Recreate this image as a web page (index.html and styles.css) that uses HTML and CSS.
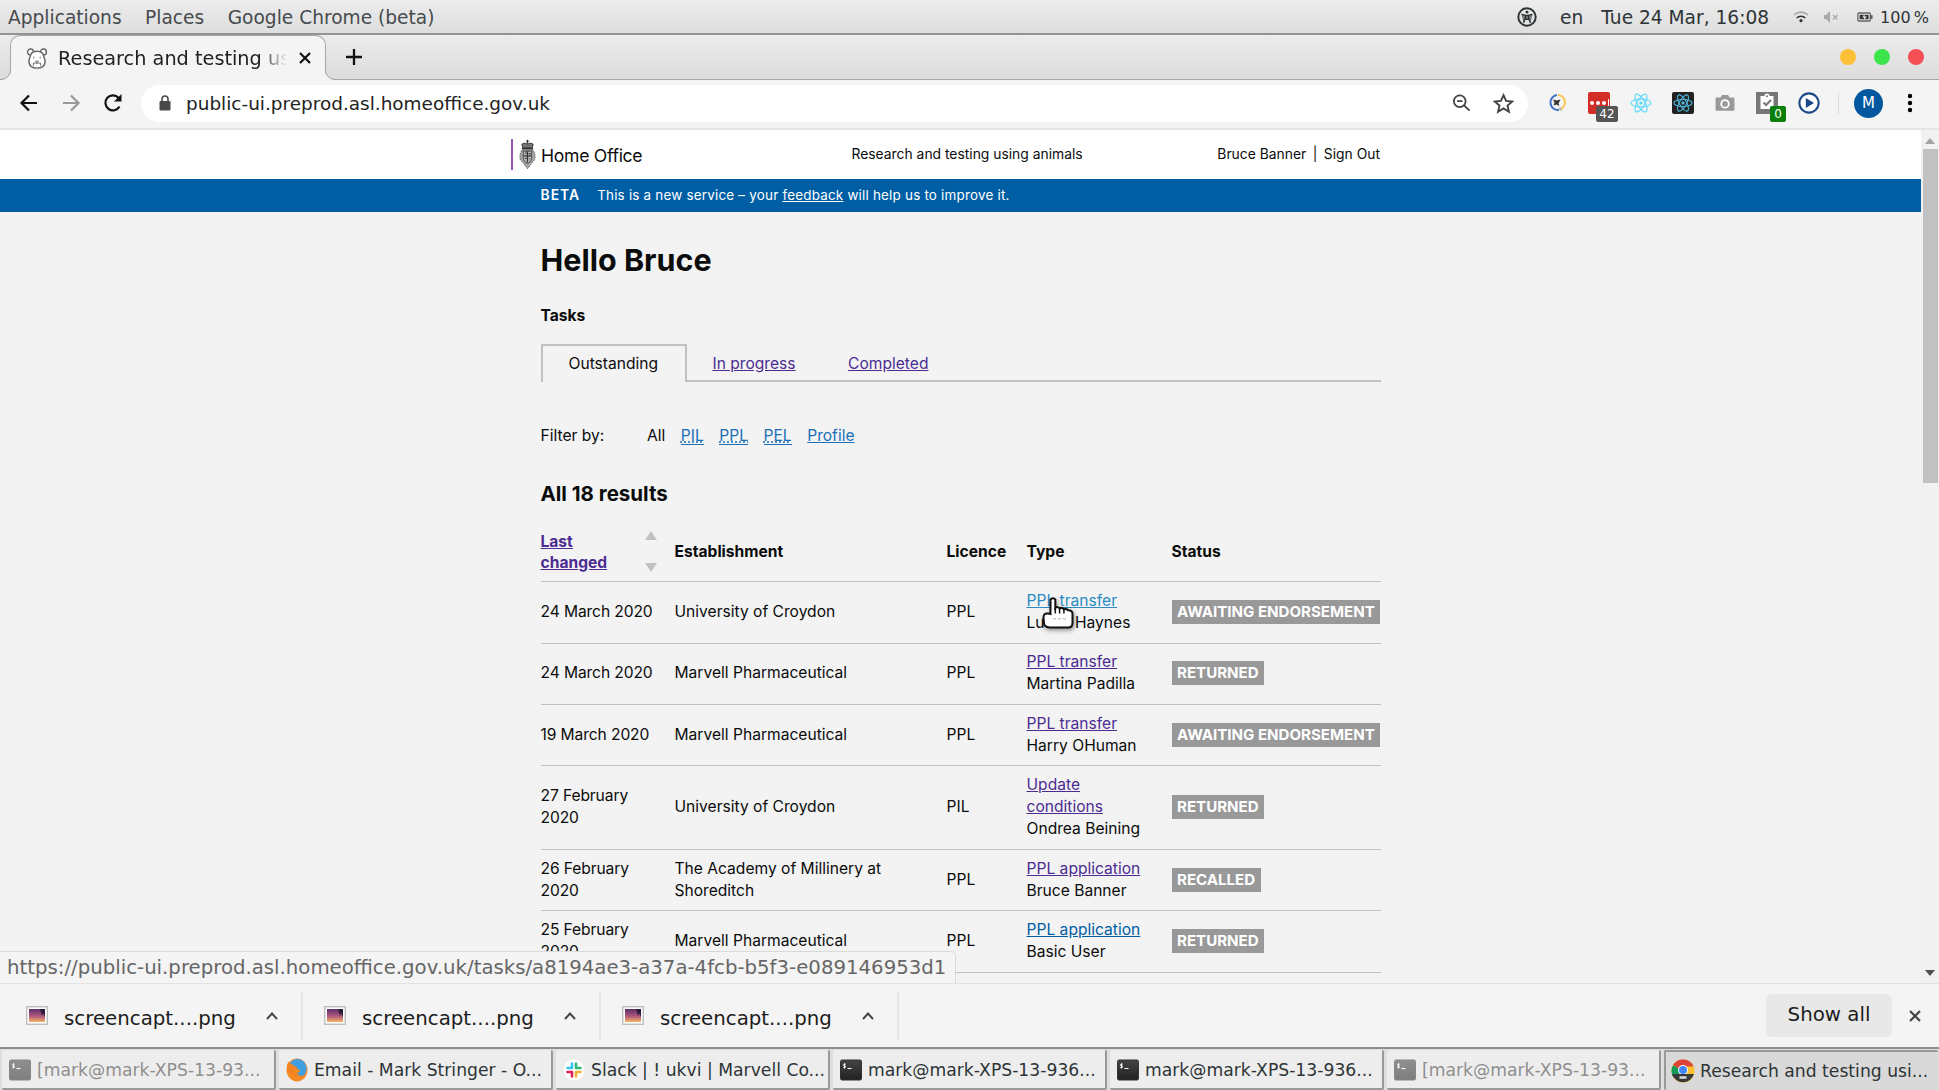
FILE: index.html
```html
<!DOCTYPE html>
<html lang="en">
<head>
<meta charset="utf-8">
<title>Research and testing using animals</title>
<link rel="stylesheet" href="styles.css">
</head>
<body>
<svg class="defs" width="0" height="0" aria-hidden="true">
  <defs>
    <linearGradient id="sunset" x1="0" y1="0" x2="0" y2="1"><stop offset="0" stop-color="#5b2f6b"/><stop offset=".55" stop-color="#b0577c"/><stop offset="1" stop-color="#f5b463"/></linearGradient>
    <linearGradient id="term" x1="0" y1="0" x2="0" y2="1"><stop offset="0" stop-color="#444"/><stop offset="1" stop-color="#222"/></linearGradient>
    <symbol id="i-picture" viewBox="0 0 22 20"><rect x=".75" y=".75" width="20.5" height="17.5" fill="#fff" stroke="#b9b9b9" stroke-width="1.3"/><rect x="3" y="3" width="16" height="13" fill="url(#sunset)"/><path d="M14 3h5v8l-2-4-1 3-1-4z" fill="#2c1a38"/></symbol>
    <symbol id="i-term" viewBox="0 0 22 22"><rect x=".5" y="1" width="21" height="20" rx="1.5" fill="url(#term)" stroke="#333"/><path d="M5.7 5.2H4.100a.9.9 0 0 0 0 1.700h.9a.9.9 0 0 1 0 1.700H3.300M4.500 4.300v5.200" stroke="#fff" fill="none"/><path d="M7.500 9.500h4" stroke="#fff" stroke-width="1.200"/></symbol>
    <symbol id="i-react" viewBox="0 0 24 24"><g fill="none" stroke="currentColor" stroke-width="1.300"><ellipse cx="12" cy="12" rx="11" ry="4.200"/><ellipse cx="12" cy="12" rx="11" ry="4.200" transform="rotate(60 12 12)"/><ellipse cx="12" cy="12" rx="11" ry="4.200" transform="rotate(120 12 12)"/></g><circle cx="12" cy="12" r="2" fill="currentColor"/></symbol>
    <symbol id="i-up" viewBox="0 0 14 10"><path d="M2 8l5-5.500L12 8" fill="none" stroke="#444" stroke-width="2"/></symbol>
    <symbol id="i-x" viewBox="0 0 14 14"><path d="M2 2l10 10M12 2L2 12" fill="none" stroke="currentColor" stroke-width="2.200"/></symbol>
  </defs>
</svg>

<header class="desktop-bar">
  <nav class="desktop-menu"><span>Applications</span><span>Places</span><span>Google Chrome (beta)</span></nav>
  <div class="desktop-status">
    <svg class="access" width="20" height="20" viewBox="0 0 20 20"><circle cx="10" cy="10" r="8.700" fill="none" stroke="#2e3436" stroke-width="2"/><circle cx="10" cy="5" r="1.500" fill="#2e3436"/><path d="M4.500 7.300l4 1v2.700l-2 5M15.500 7.300l-4 1v2.700l2 5M8.500 8.300h3v4h-3z" fill="#2e3436" stroke="#2e3436" stroke-width="1.300" fill-opacity=".6"/></svg>
    <span class="lang">en</span>
    <span class="clock">Tue 24 Mar, 16:08</span>
    <svg class="wifi" width="16" height="12" viewBox="0 0 16 12"><path d="M1 4a10 10 0 0 1 14 0" fill="none" stroke="#aaa" stroke-width="1.600"/><path d="M3.700 7a6 6 0 0 1 8.600 0" fill="none" stroke="#2e3436" stroke-width="1.600"/><circle cx="8" cy="9.700" r="1.600" fill="#2e3436"/></svg>
    <svg class="mute" width="16" height="12" viewBox="0 0 16 12"><path d="M1 4h2l4-4v12l-4-4H1z" fill="#aaa"/><path d="M10 4l4.500 4.500M14.500 4L10 8.500" stroke="#aaa" stroke-width="1.300"/></svg>
    <svg class="battery" width="16" height="10" viewBox="0 0 18 11"><rect x="1" y="1" width="14" height="9" rx="1" fill="none" stroke="#666" stroke-width="1.500"/><rect x="3" y="3" width="10" height="5" fill="#2e3436"/><path d="M8.500 2L6 6h2v3l3-4H8.500z" fill="#eee"/><rect x="15.500" y="3.500" width="2" height="4" fill="#555"/></svg>
    <span class="charge">100&#8201;%</span>
  </div>
</header>

<div class="tabstrip">
  <div class="browser-tab">
    <svg class="corner left" width="10" height="10" viewBox="0 0 10 10"><path d="M10 0v10H0A10 10 0 0 0 10 0z" fill="#f4f4f4"/><path d="M0 9.500A9.500 9.500 0 0 0 9.500 0" fill="none" stroke="#a6a6a6"/></svg>
    <svg class="bear" width="22" height="23" viewBox="0 0 24 24" fill="#fff" stroke="#666" stroke-width="1.600"><circle cx="5" cy="5" r="3.300"/><circle cx="19" cy="5" r="3.300"/><path d="M12 4.200c5 0 7 2 7.500 6 .4 1.500 1.500 3 1.300 5.500C20.500 20 17 22.500 12 22.500S3.500 20 3.200 15.700c-.2-2.500.9-4 1.300-5.500.5-4 2.500-6 7.500-6z"/><path d="M8.500 10v2M15.500 10v2M8 20v-3h8v3M10 15h4M12 15v3" fill="none" stroke-width="1"/></svg>
    <span class="tab-title">Research and testing us</span>
    <svg class="tab-close" width="14" height="14"><use href="#i-x"/></svg>
    <svg class="corner right" width="10" height="10" viewBox="0 0 10 10"><path d="M0 0v10h10A10 10 0 0 1 0 0z" fill="#f4f4f4"/><path d="M.5 0A9.500 9.500 0 0 0 10 9.500" fill="none" stroke="#a6a6a6"/></svg>
  </div>
  <svg class="new-tab" width="18" height="18" viewBox="0 0 18 18"><path d="M9 1v16M1 9h16" stroke="#111" stroke-width="2.300"/></svg>
  <div class="window-buttons"><i class="min"></i><i class="max"></i><i class="close"></i></div>
</div>

<div class="toolbar">
  <svg class="nav-icon" width="20" height="20" viewBox="0 0 20 20"><path d="M18 10H3M10 2.500L2.500 10l7.500 7.500" fill="none" stroke="#111" stroke-width="2.200"/></svg>
  <svg class="nav-icon" width="20" height="20" viewBox="0 0 20 20"><path d="M2 10h15M10 2.500l7.500 7.500-7.500 7.500" fill="none" stroke="#999" stroke-width="2.200"/></svg>
  <svg class="nav-icon reload" width="20" height="20" viewBox="0 0 20 20"><path d="M16.500 13.500A7.500 7.500 0 1 1 15.600 5" fill="none" stroke="#111" stroke-width="2.200"/><path d="M18.500 1v7.500H11z" fill="#111"/></svg>
  <div class="omnibox">
    <svg class="lock" width="12" height="16" viewBox="0 0 12 16"><rect x=".5" y="6" width="11" height="9.500" rx="1.200" fill="#4a4a4a"/><path d="M3 6V4a3 3 0 0 1 6 0v2" fill="none" stroke="#4a4a4a" stroke-width="1.600"/></svg>
    <span class="url">public-ui.preprod.asl.homeoffice.gov.uk</span>
    <svg class="zoom-out" width="20" height="18" viewBox="0 0 22 20"><circle cx="8.500" cy="8" r="6.500" fill="none" stroke="#444" stroke-width="2"/><path d="M13 12.500l6.500 6M5.500 8h6" stroke="#444" stroke-width="2"/></svg>
    <svg class="star" width="21" height="21" viewBox="0 0 24 24"><path d="M12 2.500l2.900 6.600 7.100.6-5.400 4.700 1.600 7L12 17.700l-6.200 3.700 1.600-7L2 9.700l7.100-.6z" fill="none" stroke="#444" stroke-width="2.200"/></svg>
  </div>
  <div class="extensions">
    <svg class="ext" width="22" height="22" viewBox="0 0 22 22"><path d="M11 3a7.500 7.500 0 1 0 2 15" fill="none" stroke="#3f6fc9" stroke-width="2"/><path d="M12 3a7.500 7.500 0 0 1 2 14.500" fill="none" stroke="#f7c548" stroke-width="2"/><path d="M7 7.500l3.500 1 4-1-2 4 1 2.500-3-1.500-3 1 1-2.800z" fill="#333"/><path d="M12 16l4 4-1-5z" fill="#bbb"/></svg>
    <span class="ext lastpass"><i></i><i></i><i></i><b></b><em class="count">42</em></span>
    <svg class="ext react" width="22" height="22"><use href="#i-react"/></svg>
    <span class="ext react-dark"><svg width="20" height="20"><use href="#i-react"/></svg></span>
    <svg class="ext" width="22" height="18" viewBox="0 0 22 20"><path d="M1.500 4H6l1.500-3h7L16 4h4.500q1 0 1 1v12.500q0 1-1 1h-19q-1 0-1-1V5q0-1 1-1z" fill="#999"/><circle cx="11" cy="11" r="4.200" fill="#999" stroke="#fff" stroke-width="2"/></svg>
    <span class="ext clipboard"><svg width="22" height="22" viewBox="1 0 22 22"><path d="M5.500 4h4a2.500 2.500 0 0 1 5 0h4v13h-13z" fill="#fff"/><circle cx="12" cy="4.300" r="1" fill="#777"/><path d="M8.500 10.500l2.500 2.500 5-5" fill="none" stroke="#777" stroke-width="2"/></svg><em class="count zero">0</em></span>
    <svg class="ext" width="22" height="22" viewBox="0 0 24 24"><circle cx="12" cy="12" r="10.500" fill="#fff" stroke="#1b4a86" stroke-width="2.200"/><path d="M8.500 6.500l9 5.500-9 5.500z" fill="#1b4a86"/></svg>
  </div>
  <span class="toolbar-divider"></span>
  <span class="avatar">M</span>
  <svg class="kebab" width="6" height="20" viewBox="0 0 6 20"><circle cx="3" cy="3" r="2.200"/><circle cx="3" cy="10" r="2.200"/><circle cx="3" cy="17" r="2.200"/></svg>
</div>

<div class="viewport">
  <div class="page">
    <div class="header-bar">
      <div class="site-header">
        <div class="brand">
          <svg class="crest" width="17" height="31" viewBox="0 0 18 31"><path d="M9 0v4M7.500 1.500h3" stroke="#333" stroke-width="1.200"/><path d="M3 4.500q3-2 6 0 3-2 6 0l-1 4H4z" fill="#777" stroke="#333"/><path d="M3 9.500h12" stroke="#222" stroke-width="1.500"/><path d="M3 11q-3 5-1.500 10L5 25l4 5.500 4-5.500 3.500-4Q18 16 15 11z" fill="#aaa" stroke="#555" stroke-dasharray="2 1"/><path d="M4.500 12h9v8q-1 4-4.500 5-3.500-1-4.500-5z" fill="#bbb" stroke="#444"/><path d="M9 12v12M5 17h8M6.500 14h1.500M10.500 14.500h2M6.500 19.500h1.500M11 20h1" stroke="#333" stroke-width="1.300"/></svg>
          <span>Home Office</span>
        </div>
        <span class="service">Research and testing using animals</span>
        <span class="user"><span>Bruce Banner</span><span>|</span><span>Sign Out</span></span>
      </div>
    </div>
    <div class="phase">
      <div class="phase-inner"><strong>BETA</strong><span>This is a new service – your <a>feedback</a> will help us to improve it.</span></div>
    </div>
    <main class="content">
      <h1>Hello Bruce</h1>
      <h2>Tasks</h2>
      <nav class="tabs"><span class="tab active">Outstanding</span><a class="tab visited">In progress</a><a class="tab visited">Completed</a><span class="tabs-rest"></span></nav>
      <div class="filters"><span class="filter-label">Filter by:</span><span>All</span><a class="abbr">PIL</a><a class="abbr">PPL</a><a class="abbr">PEL</a><a>Profile</a></div>
      <h3>All 18 results</h3>
      <table class="tasks">
        <colgroup><col class="c-date"><col class="c-est"><col class="c-lic"><col class="c-type"><col></colgroup>
        <thead><tr>
          <th><div class="sort"><a class="visited">Last changed</a><span class="arrows"><i class="up"></i><i class="down"></i></span></div></th>
          <th>Establishment</th><th>Licence</th><th>Type</th><th>Status</th>
        </tr></thead>
        <tbody>
          <tr><td>24 March 2020</td><td>University of Croydon</td><td>PPL</td><td><a class="hover">PPL transfer</a><br>Lucas Haynes</td><td><span class="badge">Awaiting endorsement</span></td></tr>
          <tr><td>24 March 2020</td><td>Marvell Pharmaceutical</td><td>PPL</td><td><a class="visited">PPL transfer</a><br>Martina Padilla</td><td><span class="badge">Returned</span></td></tr>
          <tr><td>19 March 2020</td><td>Marvell Pharmaceutical</td><td>PPL</td><td><a class="visited">PPL transfer</a><br>Harry OHuman</td><td><span class="badge">Awaiting endorsement</span></td></tr>
          <tr><td>27 February 2020</td><td>University of Croydon</td><td>PIL</td><td><a class="visited">Update conditions</a><br>Ondrea Beining</td><td><span class="badge">Returned</span></td></tr>
          <tr><td>26 February 2020</td><td>The Academy of Millinery at Shoreditch</td><td>PPL</td><td><a class="visited">PPL application</a><br>Bruce Banner</td><td><span class="badge">Recalled</span></td></tr>
          <tr><td>25 February 2020</td><td>Marvell Pharmaceutical</td><td>PPL</td><td><a>PPL application</a><br>Basic User</td><td><span class="badge">Returned</span></td></tr>
        </tbody>
      </table>
    </main>
  </div>
  <div class="scrollbar"><i class="sb-up"></i><i class="sb-thumb"></i><i class="sb-down"></i></div>
  <div class="status-bubble">https://public-ui.preprod.asl.homeoffice.gov.uk/tasks/a8194ae3-a37a-4fcb-b5f3-e089146953d1</div>
  <svg class="cursor" width="36" height="36" viewBox="0 0 36 36"><path d="M10.500 3.500q2.500-2.500 4.800 0V12q2-2 4.300.5 2.500-1.500 4.200.8 2.600-1.200 4.200.9 4-.2 4.500 3V27q0 4.500-4.500 4.500H9.500Q4.500 31 4 27.500l-.5-6Q3.500 17 8 17.500l2.500.5z" fill="#fff" stroke="#111" stroke-width="2"/><path d="M15.300 12v5.500M19.600 13v4.500M23.900 14v3.500" stroke="#111" stroke-width="1.500"/><path d="M13 22q1.500 3 3 0M18 22q1.500 3 3 0M23 22q1.500 3 3 0" fill="none" stroke="#aaa"/></svg>
</div>

<div class="downloads">
  <div class="download"><svg width="22" height="20"><use href="#i-picture"/></svg><span>screencapt....png</span><svg class="chev" width="14" height="10"><use href="#i-up"/></svg></div>
  <div class="download"><svg width="22" height="20"><use href="#i-picture"/></svg><span>screencapt....png</span><svg class="chev" width="14" height="10"><use href="#i-up"/></svg></div>
  <div class="download"><svg width="22" height="20"><use href="#i-picture"/></svg><span>screencapt....png</span><svg class="chev" width="14" height="10"><use href="#i-up"/></svg></div>
  <span class="show-all">Show all</span>
  <svg class="dl-close" width="14" height="14"><use href="#i-x"/></svg>
</div>

<footer class="taskbar">
  <div class="task dim"><svg width="22" height="22"><use href="#i-term"/></svg><span>[mark@mark-XPS-13-93...</span></div>
  <div class="task"><svg width="22" height="24" viewBox="0 0 22 22" preserveAspectRatio="none"><circle cx="11" cy="11" r="10.500" fill="#f58a24"/><path d="M4 5Q8-.5 15 1.500 21 4 20.500 11q-1 5-5 5.500-4-.5-5-3 3 .5 4-1.500-2-1-3.500-2.500Q10 7 7.500 7 6 5 4 5z" fill="#3f9fe0"/><path d="M1 6l2-3 1 3q3-1 4 2 3 .5 3 2l-3 1.200q1 3.300 5 3.300l-4 3-7-4z" fill="#f58220"/></svg><span>Email - Mark Stringer - O...</span></div>
  <div class="task"><svg width="22" height="22" viewBox="0 0 22 22"><circle cx="11" cy="11" r="10.500" fill="#fff"/><g stroke-width="2.600" stroke-linecap="round"><path d="M9 4.500v3.500M4.500 9H9" stroke="#36c5f0"/><path d="M13 4.500V9M13.500 9h4" stroke="#2eb67d"/><path d="M13 13v4.500M13 13h4.500" stroke="#ecb22e"/><path d="M9 13v4.500M4.500 13H8" stroke="#e01e5a"/></g></svg><span>Slack | ! ukvi | Marvell Co...</span></div>
  <div class="task"><svg width="22" height="22"><use href="#i-term"/></svg><span>mark@mark-XPS-13-936...</span></div>
  <div class="task"><svg width="22" height="22"><use href="#i-term"/></svg><span>mark@mark-XPS-13-936...</span></div>
  <div class="task dim"><svg width="22" height="22"><use href="#i-term"/></svg><span>[mark@mark-XPS-13-93...</span></div>
  <div class="task current"><svg width="24" height="24" viewBox="0 0 24 24"><circle cx="12" cy="12" r="11.500" fill="#fbc02d"/><path d="M12 12L2 6.300A11.500 11.500 0 0 1 22.500 7.500H12z" fill="#db4437"/><path d="M2 6.300A11.500 11.500 0 0 0 3 19l9-7z" fill="#0f9d58"/><path d="M1 15h22a11.500 11.500 0 0 1-22 0z" fill="#3a3a3a"/><circle cx="12" cy="11" r="5" fill="#fff"/><circle cx="12" cy="11" r="4" fill="#4285f4"/><path d="M4 15h16v3H4z" fill="#3a3a3a"/><path d="M8.500 18.500h7" stroke="#ddd" stroke-width="2.500"/></svg><span>Research and testing usi...</span></div>
</footer>
</body>
</html>
```
FILE: styles.css
```css
* { box-sizing: border-box; }
html, body { height: 100%; }
body {
  margin: 0;
  display: flex;
  flex-direction: column;
  overflow: hidden;
  background: #f3f3f3;
  font-family: "DejaVu Sans", sans-serif;
  color: #2e3436;
}
svg { display: block; flex: none; }
.defs { position: absolute; }

/* Desktop panel */
.desktop-bar {
  height: 35px;
  flex: none;
  display: flex;
  justify-content: space-between;
  align-items: center;
  padding: 1px 10px 0 8px;
  background: linear-gradient(#ececec, #dedede);
  border-bottom: 2px solid #939393;
  font-size: 18.600px;
  white-space: nowrap;
}
.desktop-menu { display: flex; gap: 23.500px; color: #464b4d; }
.desktop-status { display: flex; align-items: center; }
.lang { margin-left: 23px; }
.clock { margin-left: 18px; }
.wifi { margin-left: 24px; }
.mute { margin-left: 14px; }
.battery { margin-left: 18px; }
.charge { margin-left: 7px; font-size: 16px; }

/* Tab strip */
.tabstrip {
  height: 45px;
  flex: none;
  display: flex;
  align-items: center;
  background: linear-gradient(#ececec, #dcdcdc);
  border-bottom: 1px solid #a6a6a6;
}
.browser-tab {
  position: relative;
  width: 316px;
  height: 45px;
  margin: 0 0 -1px 10px;
  display: flex;
  align-items: center;
  padding: 0 13px 0 15px;
  background: #f4f4f4;
  border: 1px solid #a6a6a6;
  border-bottom: 0;
  border-radius: 10px 10px 0 0;
}
.corner { position: absolute; bottom: 0; }
.corner.left { left: -10px; }
.corner.right { right: -10px; }
.tab-title {
  width: 229px;
  margin-left: 10px;
  overflow: hidden;
  white-space: nowrap;
  font-size: 19.300px;
  color: #222;
  -webkit-mask-image: linear-gradient(90deg, #000 88%, transparent);
  mask-image: linear-gradient(90deg, #000 88%, transparent);
}
.tab-close { margin-left: auto; color: #111; }
.new-tab { margin-left: 19px; }
.window-buttons { margin-left: auto; display: flex; gap: 18px; padding-right: 15px; }
.window-buttons i { width: 16px; height: 16px; border-radius: 50%; }
.min { background: #fbc035; }
.max { background: #3be54b; }
.close { background: #f55056; }

/* Toolbar */
.toolbar {
  height: 50px;
  flex: none;
  display: flex;
  align-items: center;
  padding: 0 26px 2px 19px;
  background: #f4f4f4;
  border-bottom: 2px solid #e6e6e6;
}
.nav-icon { margin-right: 22px; }
.nav-icon.reload { margin-right: 18px; }
.omnibox {
  width: 1387px;
  height: 37px;
  display: flex;
  align-items: center;
  padding: 0 14px 0 18px;
  background: #fff;
  border-radius: 19px;
}
.url { margin-left: 15px; font-size: 18.440px; color: #222; }
.zoom-out { margin-left: auto; margin-right: 21px; }
.extensions { display: flex; align-items: center; margin-left: 18px; gap: 20px; }
.ext { flex: none; }
.lastpass {
  position: relative;
  width: 22px; height: 22px;
  display: flex; align-items: center; justify-content: center; gap: 2px;
  background: #d32d27;
  border-radius: 2px;
}
.lastpass i { width: 4px; height: 4px; border-radius: 50%; background: #fff; }
.lastpass b { width: 1px; height: 8px; background: #fff; }
.count {
  position: absolute;
  left: 8px; top: 14px;
  width: 22px; height: 16px;
  border-radius: 2px;
  background: #555;
  color: #fff;
  font: 12px/16px "DejaVu Sans", sans-serif;
  text-align: center;
}
.react { color: #61dafb; }
.react-dark { padding: 1px; background: #222; border-radius: 2px; color: #4db8dc; }
.clipboard { position: relative; background: #777; }
.count.zero { left: 14px; width: 16px; background: #0a800a; }
.toolbar-divider { width: 1px; height: 21px; margin: 0 15px 0 18px; background: #dcdcdc; }
.avatar {
  width: 29px; height: 29px;
  border-radius: 50%;
  background: #04589f;
  color: #fff;
  font: 15px/29px "DejaVu Sans", sans-serif;
  text-align: center;
}
.kebab { margin-left: auto; }

/* Web page */
.viewport {
  position: relative;
  height: 853px;
  flex: none;
  display: flex;
  overflow: hidden;
  background: #f3f3f3;
}
.page { flex: 1; font-family: Inter, sans-serif; color: #0b0c0c; font-size: 15.600px; line-height: 22.200px; }
.header-bar { background: #fff; }
.site-header {
  width: 1380px;
  height: 49px;
  display: grid;
  grid-template-columns: 340.500px 1fr auto;
  align-items: center;
  padding-left: 511px;
  font-size: 13.870px;
}
.service, .user { padding-bottom: 1px; }
.user { display: flex; gap: 6.500px; }
.brand { display: flex; align-items: center; gap: 5px; height: 31px; padding-left: 6px; border-left: 2px solid #9b59b6; font-size: 17.600px; letter-spacing: -.3px; }
.brand span { padding-top: 3px; }
.phase { background: #005ea5; color: #fff; font-size: 13.450px; letter-spacing: .2px; }
.phase-inner { width: 840px; height: 33px; margin: 0 auto; display: flex; align-items: center; gap: 17px; }
.phase strong { font-size: 13.900px; font-weight: 600; letter-spacing: 1px; }
.phase a { color: #fff; text-decoration: underline; }
.content { width: 840px; margin: 0 auto; }
h1 { margin: 30px 0 0; font-size: 30.500px; line-height: 36px; font-weight: 700; }
h2 { margin: 27px 0 0; font-size: 15.600px; line-height: 22px; font-weight: 700; }
.tabs { display: flex; height: 38px; margin-top: 17px; }
.tab { height: 38px; line-height: 36px; border-bottom: 2px solid #bfc1c3; }
.tab.active { width: 146px; padding: 0 0 0 26px; border: 2px solid #bfc1c3; border-bottom: 0; line-height: 35px; }
.tabs a.tab { padding: 1.500px 26.500px 0 26px; }
.tabs-rest { flex: 1; border-bottom: 2px solid #bfc1c3; }
a { color: #005ea5; text-decoration: underline; }
a.visited { color: #4c2c92; }
a.hover { color: #2b8cc4; }
.filters { display: flex; gap: 15.500px; margin-top: 43px; }
.filter-label { width: 91px; }
.filters a { color: #1d70b8; }
.filters a.abbr { height: 20px; margin-bottom: 2px; border-bottom: 1px solid; text-decoration-style: dotted; }
h3 { margin: 34px 0 0; font-size: 20.500px; line-height: 26px; font-weight: 700; }
.tasks { width: 840px; margin-top: 15px; border-collapse: collapse; table-layout: fixed; }
.c-date { width: 134px; }
.c-est { width: 272px; }
.c-lic { width: 80px; }
.c-type { width: 145px; }
.tasks th { height: 59.500px; padding: 0 20px 0 0; text-align: left; font-weight: 700; border-bottom: 1px solid #bfc1c3; line-height: 21.500px; }
.tasks td { height: 61.400px; padding: 7.500px 20px 8.500px 0; border-bottom: 1px solid #bfc1c3; vertical-align: middle; }
.tasks td:nth-child(1), .tasks th:nth-child(1) { padding-right: 14px; }
.tasks td:nth-child(1) { letter-spacing: -.1px; }
.tasks th:nth-child(3) { padding-right: 0; }
.tasks td:last-child { padding-right: 0; }
.sort { display: flex; justify-content: space-between; width: 116px; padding-top: 1px; }
.sort a { width: 80px; }
.arrows { display: flex; flex-direction: column; justify-content: space-between; height: 41px; }
.up { border: 6px solid transparent; border-top: 0; border-bottom: 9px solid #bfc1c3; }
.down { border: 6px solid transparent; border-bottom: 0; border-top: 9px solid #bfc1c3; }
.badge {
  display: inline-block;
  padding: 0 5.500px;
  background: #999;
  color: #fff;
  font-size: 15.080px;
  font-weight: 700;
  line-height: 24px;
  text-transform: uppercase;
  white-space: nowrap;
}
.scrollbar { width: 18px; flex: none; display: flex; flex-direction: column; align-items: center; background: #f1f1f1; padding: 8px 0 7px; }
.sb-up { border: 5px solid transparent; border-top: 0; border-bottom: 6px solid #a3a3a3; }
.sb-thumb { width: 15px; height: 334px; margin-top: 5px; background: #c1c1c1; }
.sb-down { margin-top: auto; border: 5px solid transparent; border-bottom: 0; border-top: 6px solid #505050; }
.status-bubble {
  position: absolute;
  left: 0; bottom: 0;
  width: 956px; height: 32px;
  padding-left: 7px;
  background: #f4f4f4;
  border: 1px solid #dadada;
  border-width: 1px 1px 0 0;
  border-radius: 0 5px 0 0;
  color: #666;
  font-size: 19.730px;
  line-height: 32px;
  white-space: nowrap;
}
.cursor { position: absolute; left: 1040px; top: 466px; filter: drop-shadow(1px 2px 2px rgba(0, 0, 0, .4)); }

/* Downloads shelf */
.downloads {
  height: 64px;
  flex: none;
  display: flex;
  align-items: center;
  padding-right: 17px;
  background: #f4f4f4;
  border-top: 1px solid #e2e2e2;
  color: #1c1c1c;
  font-size: 19.800px;
}
.download { width: 298px; height: 48px; display: flex; align-items: center; padding-left: 21px; border-right: 2px solid #e6e6e6; }
.download:first-child { width: 303px; padding-left: 26px; }
.download > span { margin-left: 16px; padding-top: 6px; }
.chev { margin-left: 29px; }
.show-all { margin-left: auto; width: 126px; height: 43px; border-radius: 6px; background: #e8e8e8; line-height: 42px; text-align: center; }
.dl-close { margin-left: 16px; color: #444; }

/* Window list */
.taskbar {
  height: 43px;
  flex: none;
  display: grid;
  grid-template-columns: repeat(7, 1fr);
  gap: 3px;
  padding: 1px 1px 0 2px;
  background: #dedede;
  border-top: 2px solid #8d8d8d;
  font-size: 17.200px;
}
.task { display: flex; align-items: center; gap: 6px; padding: 2px 0 0 7px; overflow: hidden; white-space: nowrap; background: #ededed; border: 1px solid #999; border-width: 0 2px 2px 0; border-radius: 2px; }
.dim { color: #8f8f8f; }
.dim svg { opacity: .55; }
.task.current { gap: 5px; padding: 0 0 0 5px; background: #d9d9d9; border-width: 2px 0 0 2px; }
```
